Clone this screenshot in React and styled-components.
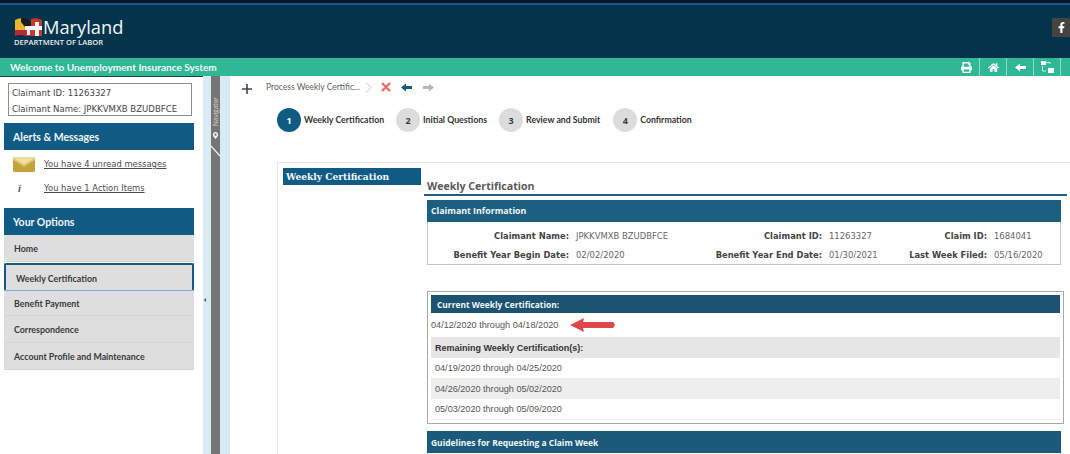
import React from 'react';
import styled, { createGlobalStyle } from 'styled-components';
import { FaPrint, FaHome, FaMapMarkerAlt, FaFacebookF } from 'react-icons/fa';

const GlobalStyle = createGlobalStyle`
  html, body { margin: 0; padding: 0; background: #fff; }
  body { width: 1070px; height: 454px; overflow: hidden; font-family: "DejaVu Sans", sans-serif; }
  * { box-sizing: border-box; }
`;

const Page = styled.div`
  width: 1070px;
  height: 454px;
  overflow: hidden;
  display: flex;
  flex-direction: column;
`;

const Header = styled.header`
  height: 58px;
  flex: none;
  background: #03344b;
  border-top: 3px solid #03182a;
  box-shadow: inset 0 2px 0 #1c5a85;
  display: flex;
  justify-content: space-between;
  padding: 14px 0 0 14px;
`;

const Logo = styled.div`
  display: flex;
  flex-direction: column;
`;

const LogoRow = styled.div`
  display: flex;
  align-items: center;
  height: 20px;
`;

const LogoWord = styled.span`
  font-family: "Open Sans", sans-serif;
  font-size: 18.3px;
  line-height: 20px;
  color: #f4f7f8;
  margin-left: 1px;
`;

const LogoSub = styled.span`
  font-family: "Open Sans", sans-serif;
  font-weight: 600;
  font-size: 7.6px;
  line-height: 10px;
  color: #e6edf0;
`;

const SocialIcon = styled.div`
  width: 18px;
  height: 19px;
  margin-top: 1px;
  background: #464442;
  color: #fff;
  font-size: 11px;
  display: flex;
  align-items: center;
  justify-content: center;
`;

const WelcomeBar = styled.div`
  height: 18px;
  flex: none;
  background: #2fb796;
  display: flex;
  justify-content: space-between;
  align-items: center;
  padding-left: 10px;
`;

const WelcomeText = styled.span`
  font-family: "Lato", sans-serif;
  font-weight: 700;
  font-size: 10.1px;
  color: #f6fbfa;
`;

const BarIcons = styled.div`
  display: flex;
  height: 100%;
  margin-right: 9px;
`;

const BarIcon = styled.div`
  width: 27px;
  height: 100%;
  display: flex;
  align-items: center;
  justify-content: center;
  color: #fff;
  font-size: 11px;
  border-right: 1px solid #8ddbc8;
`;

const Body = styled.div`
  flex: 1;
  display: flex;
  min-height: 0;
`;

const Sidebar = styled.aside`
  width: 203px;
  flex: none;
  border-top: 1px solid #1c3f4e;
  height: 100%;
  padding: 6px 9px 0 4px;
`;

const ClaimantBox = styled.div`
  margin: 0 2px 7px 4px;
  height: 33px;
  border: 1px solid #8c8c8c;
  padding: 1px 3px;
  font-size: 8.55px;
  line-height: 16px;
  color: #444;
  white-space: nowrap;
`;

const SideHeader = styled.div`
  background: #0f5b84;
  color: #f2f7fa;
  font-family: "Lato", sans-serif;
  font-weight: 700;
  font-size: 10.5px;
  height: 27px;
  display: flex;
  align-items: center;
  padding-left: 9px;
`;

const AlertList = styled.div`
  height: 58px;
  padding-top: 2px;
`;

const AlertRow = styled.div`
  height: 24px;
  display: flex;
  align-items: center;
`;

const AlertIcon = styled.div`
  width: 40px;
  padding-left: 9px;
  display: flex;
  font-family: "Liberation Serif", serif;
  font-style: italic;
  font-weight: 700;
  font-size: 10px;
  color: #555;
`;

const AlertLink = styled.a`
  font-size: 8.4px;
  color: #4a4a4a;
  text-decoration: underline;
  white-space: nowrap;
`;

const OptionList = styled.nav`
  display: flex;
  flex-direction: column;
`;

const Option = styled.div`
  height: ${p => p.$h}px;
  background: #dedede;
  border-bottom: 1px solid #d5d5d5;
  display: flex;
  align-items: center;
  padding: 1px 0 0 10px;
  font-family: "Lato", sans-serif;
  font-weight: 700;
  font-size: 8.85px;
  color: #3a3a3a;
  white-space: nowrap;
`;

const ActiveOption = styled(Option)`
  padding-left: 10px;
  margin-top: 1px;
  border: 1px solid #0f5b84;
  border-width: 2px 2px 1px 2px;
  border-bottom-color: #7ea8d6;
  border-radius: 2px;
`;

const Splitter = styled.div`
  width: 27px;
  flex: none;
  background: #d9eaf3;
  display: flex;
  padding-left: 8px;
`;

const Strip = styled.div`
  width: 9px;
  height: 100%;
  background: #777574;
  color: #e8e8e8;
  display: flex;
  flex-direction: column;
  align-items: center;
  padding-top: 21px;
`;

const StripLabel = styled.span`
  writing-mode: vertical-rl;
  transform: rotate(180deg);
  font-family: "Open Sans", sans-serif;
  font-size: 6.4px;
  line-height: 9px;
  color: #d8d8d8;
`;

const StripPin = styled(FaMapMarkerAlt)`
  margin-top: 6px;
  flex: none;
`;

const StripSlash = styled.svg`
  margin-top: 7px;
  overflow: visible;
  flex: none;
`;

const CollapseTick = styled.div`
  width: 0;
  height: 0;
  position: absolute;
  left: 204px;
  top: 298px;
  border-right: 2px solid #4a5560;
  border-top: 2px solid transparent;
  border-bottom: 2px solid transparent;
`;

const Main = styled.main`
  flex: 1;
  min-width: 0;
`;

const Toolbar = styled.div`
  height: 22px;
  display: flex;
  align-items: center;
  padding-left: 12px;
`;

const PlusSign = styled.span`
  width: 24px;
  display: flex;
  margin-top: 3px;
`;

const Crumb = styled.span`
  font-family: "Lato", sans-serif;
  font-size: 8.5px;
  color: #5f5f5f;
  width: 99px;
  white-space: nowrap;
`;

const ToolIcon = styled.span`
  display: flex;
  margin-right: ${p => p.$gap}px;
`;

const Steps = styled.ol`
  list-style: none;
  margin: 10px 0 0;
  padding: 0 0 0 47px;
  height: 24px;
  display: flex;
`;

const Step = styled.li`
  display: flex;
  align-items: center;
  margin-right: ${p => p.$gap}px;
`;

const StepCircle = styled.span`
  width: 24px;
  height: 24px;
  border-radius: 50%;
  background: ${p => (p.$active ? '#0f5b84' : '#dcdcdc')};
  color: ${p => (p.$active ? '#fff' : '#3c3c3c')};
  font-family: "Open Sans", sans-serif;
  font-weight: 700;
  font-size: 9px;
  display: flex;
  align-items: center;
  justify-content: center;
  margin-right: 3px;
`;

const StepLabel = styled.span`
  font-family: "Lato", sans-serif;
  font-weight: 700;
  font-size: 8.75px;
  color: #333;
  margin-top: -2px;
  white-space: nowrap;
`;

const Panel = styled.section`
  margin: 30px 0 0 47px;
  border-top: 1px solid #e8e8e8;
  border-left: 1px solid #e8e8e8;
  display: flex;
  height: 300px;
  overflow: hidden;
`;

const TabColumn = styled.div`
  width: 143px;
  flex: none;
  padding: 5px 0 0 5px;
`;

const Tab = styled.div`
  height: 17px;
  width: 138px;
  background: #0f5b84;
  color: #f4f8fa;
  font-family: "DejaVu Serif", serif;
  font-weight: 700;
  font-size: 9.1px;
  line-height: 17px;
  padding-left: 3px;
  white-space: nowrap;
`;

const Content = styled.div`
  flex: 1;
  min-width: 0;
  padding: 17px 0 0 3px;
`;

const PageTitle = styled.h2`
  margin: 0 3px 4px 0;
  height: 16px;
  padding-left: 3px;
  border-bottom: 2px solid #1a5f7f;
  font-family: "Open Sans", sans-serif;
  font-weight: 700;
  font-size: 10.6px;
  line-height: 12px;
  color: #5a5a5a;
`;

const InfoBox = styled.div`
  width: 634px;
  margin-left: 3px;
  height: 65px;
  border: 1px solid #c4c4c4;
  border-top: 0;
`;

const BandTitle = styled.div`
  height: ${p => p.$h}px;
  background: ${p => p.$bg};
  color: #f3f7f9;
  font-family: "Open Sans", sans-serif;
  font-weight: 700;
  font-size: ${p => p.$fs}px;
  display: flex;
  align-items: center;
  padding-left: ${p => p.$pad}px;
  margin: ${p => (p.$flush ? '0 -1px' : '0')};
`;

const InfoGrid = styled.dl`
  margin: 4px 0 0;
  display: grid;
  grid-template-columns: 141px 99px 142px 70px 83px 1fr;
  column-gap: 6px;
  grid-auto-rows: 19px;
  font-size: 8.45px;
  align-items: center;
  white-space: nowrap;
`;

const InfoLabel = styled.dt`
  font-family: "DejaVu Sans", sans-serif;
  font-weight: 700;
  font-size: 8.35px;
  color: #444;
  text-align: right;
`;

const InfoValue = styled.dd`
  margin: 0 0 0 1px;
  color: #666;
`;

const CurrentBox = styled.div`
  width: 637px;
  margin: 26px 0 0 3px;
  height: 133px;
  border: 1px solid #a8a8a8;
  padding: 3px;
`;

const DateLine = styled.div`
  height: 24px;
  display: flex;
  align-items: center;
  gap: 12px;
  font-family: "Liberation Sans", sans-serif;
  font-size: 9.15px;
  color: #555;
`;

const RemainingTable = styled.div`
  border-bottom: 1px solid #eee;
`;

const RemainingRow = styled.div`
  height: ${p => p.$h}px;
  display: flex;
  align-items: center;
  padding-left: 4px;
  background: ${p => (p.$shade ? '#eeeeee' : '#fff')};
  font-family: "Liberation Sans", sans-serif;
  font-size: 9.1px;
  color: #555;
`;

const RemainingHead = styled(RemainingRow)`
  background: #e6e6e6;
  font-weight: 700;
  font-size: 9px;
  color: #333;
`;

const GuidelineBox = styled.div`
  width: 634px;
  height: 30px;
  margin: 7px 0 0 3px;
  border: 1px solid #c4c4c4;
  border-top: 0;
`;

const Flag = () => (
  <svg width="28" height="21" viewBox="0 0 28 21">
    <path d="M1 3 Q6 0 11 2 L11 13 L1 13 Z" fill="#e8b92f" />
    <path d="M7 1 L12 1 L18 7 L18 10 L11 10 L7 5 Z" fill="#1d1a1a" />
    <path d="M17 2 Q23 0 28 3 L28 19 L12 19 L12 9 L17 9 Z" fill="#c6392f" />
    <path d="M1 13 L12 13 L12 19 Q6 17 1 19 Z" fill="#b8283a" />
    <path d="M11 9 L21 9 L21 5 L25 5 L25 9 L28 9 L28 13 L25 13 L25 19 L21 19 L21 13 L16 13 L16 18 L13 18 L13 13 L11 13 Z" fill="#f5f5f5" />
  </svg>
);

const ArrowIcon = ({ color, w = 11 }) => (
  <svg width={w} height="9" viewBox="0 0 11 9">
    <path d="M0 4.5 L5 0.5 L5 3 L11 3 L11 6 L5 6 L5 8.5 Z" fill={color} />
  </svg>
);

const RightArrowIcon = () => (
  <svg width="11" height="9" viewBox="0 0 11 9">
    <path d="M11 4.5 L6 0.5 L6 3 L0 3 L0 6 L6 6 L6 8.5 Z" fill="#b5b5b5" />
  </svg>
);

const SitemapIcon = () => (
  <svg width="13" height="12" viewBox="0 0 13 12">
    <rect x="0" y="0" width="5" height="4" fill="#fff" />
    <rect x="7" y="7" width="6" height="5" fill="#fff" />
    <path d="M5 1.5 H9 V3" stroke="#d8f3ec" strokeWidth="1" fill="none" />
    <path d="M1.5 5 V10 H5" stroke="#d8f3ec" strokeWidth="1" fill="none" />
  </svg>
);

const MailIcon = () => (
  <svg width="22" height="15" viewBox="0 0 22 15">
    <rect width="22" height="15" rx="1.5" fill="#c3a33d" />
    <path d="M0 1 L11 8 L22 1 L22 0 L0 0 Z" fill="#eedf9f" />
    <path d="M0 2 L11 9 L22 2" stroke="#e9d88f" strokeWidth="1" fill="none" />
  </svg>
);

const RedArrow = () => (
  <svg width="46" height="14" viewBox="0 0 46 14">
    <path d="M0 7 L14 0 L13 4 L43 4 Q46.5 7 43 10 L13 10 L14 14 Z" fill="#e0474a" />
  </svg>
);

const claimInfo = [
  ['Claimant Name:', 'JPKKVMXB BZUDBFCE', 'Claimant ID:', '11263327', 'Claim ID:', '1684041'],
  ['Benefit Year Begin Date:', '02/02/2020', 'Benefit Year End Date:', '01/30/2021', 'Last Week Filed:', '05/16/2020'],
];

const steps = [
  { n: 1, label: 'Weekly Certification', gap: 12, active: true },
  { n: 2, label: 'Initial Questions', gap: 12 },
  { n: 3, label: 'Review and Submit', gap: 13 },
  { n: 4, label: 'Confirmation', gap: 0 },
];

const App = () => (
  <Page>
    <GlobalStyle />
    <Header>
      <Logo>
        <LogoRow>
          <Flag />
          <LogoWord>Maryland</LogoWord>
        </LogoRow>
        <LogoSub>DEPARTMENT OF LABOR</LogoSub>
      </Logo>
      <SocialIcon><FaFacebookF /></SocialIcon>
    </Header>
    <WelcomeBar>
      <WelcomeText>Welcome to Unemployment Insurance System</WelcomeText>
      <BarIcons>
        <BarIcon><FaPrint /></BarIcon>
        <BarIcon><FaHome /></BarIcon>
        <BarIcon><ArrowIcon color="#fff" /></BarIcon>
        <BarIcon><SitemapIcon /></BarIcon>
      </BarIcons>
    </WelcomeBar>
    <Body>
      <Sidebar>
        <ClaimantBox>
          Claimant ID: 11263327<br />
          Claimant Name: JPKKVMXB BZUDBFCE
        </ClaimantBox>
        <SideHeader>Alerts &amp; Messages</SideHeader>
        <AlertList>
          <AlertRow>
            <AlertIcon><MailIcon /></AlertIcon>
            <AlertLink>You have 4 unread messages</AlertLink>
          </AlertRow>
          <AlertRow>
            <AlertIcon>&nbsp;&nbsp;i</AlertIcon>
            <AlertLink>You have 1 Action Items</AlertLink>
          </AlertRow>
        </AlertList>
        <SideHeader>Your Options</SideHeader>
        <OptionList>
          <Option $h={27}>Home</Option>
          <ActiveOption $h={28}>Weekly Certification</ActiveOption>
          <Option $h={25}>Benefit Payment</Option>
          <Option $h={27}>Correspondence</Option>
          <Option $h={27}>Account Profile and Maintenance</Option>
        </OptionList>
      </Sidebar>
      <Splitter>
        <Strip>
          <StripLabel>Navigator</StripLabel>
          <StripPin size={7} color="#f2f2f2" />
          <StripSlash width="9" height="10" viewBox="0 0 9 10">
            <path d="M0 0 L9 10" stroke="#f0f0f0" strokeWidth="1.2" />
          </StripSlash>
        </Strip>
      </Splitter>
      <CollapseTick />
      <Main>
        <Toolbar>
          <PlusSign>
            <svg width="10" height="10" viewBox="0 0 10 10">
              <path d="M5 0 V10 M0 5 H10" stroke="#444" strokeWidth="1.6" />
            </svg>
          </PlusSign>
          <Crumb>Process Weekly Certific...</Crumb>
          <ToolIcon $gap={9}>
            <svg width="7" height="11" viewBox="0 0 7 11">
              <path d="M1 0.5 L6 5.5 L1 10.5" stroke="#c8c8c8" strokeWidth="1" fill="none" />
            </svg>
          </ToolIcon>
          <ToolIcon $gap={10}>
            <svg width="10" height="10" viewBox="0 0 10 10">
              <path d="M1 1 L9 9 M9 1 L1 9" stroke="#ec6a6a" strokeWidth="2.4" />
            </svg>
          </ToolIcon>
          <ToolIcon $gap={11}><ArrowIcon color="#0f5b84" /></ToolIcon>
          <ToolIcon $gap={0}><RightArrowIcon /></ToolIcon>
        </Toolbar>
        <Steps>
          {steps.map(s => (
            <Step key={s.n} $gap={s.gap}>
              <StepCircle $active={s.active}>{s.n}</StepCircle>
              <StepLabel>{s.label}</StepLabel>
            </Step>
          ))}
        </Steps>
        <Panel>
          <TabColumn>
            <Tab>Weekly Certification</Tab>
          </TabColumn>
          <Content>
            <PageTitle>Weekly Certification</PageTitle>
            <InfoBox>
              <BandTitle $h={22} $bg="#1d5f80" $pad={4} $fs={8.8} $flush>Claimant Information</BandTitle>
              <InfoGrid>
                {claimInfo.map(row =>
                  row.map((cell, i) =>
                    i % 2 === 0
                      ? <InfoLabel key={cell}>{cell}</InfoLabel>
                      : <InfoValue key={cell}>{cell}</InfoValue>
                  )
                )}
              </InfoGrid>
            </InfoBox>
            <CurrentBox>
              <BandTitle $h={18} $bg="#1b5370" $pad={6} $fs={8.4}>Current Weekly Certification:</BandTitle>
              <DateLine>
                04/12/2020 through 04/18/2020
                <RedArrow />
              </DateLine>
              <RemainingTable>
                <RemainingHead $h={21}>Remaining Weekly Certification(s):</RemainingHead>
                <RemainingRow $h={20}>04/19/2020 through 04/25/2020</RemainingRow>
                <RemainingRow $h={21} $shade>04/26/2020 through 05/02/2020</RemainingRow>
                <RemainingRow $h={20}>05/03/2020 through 05/09/2020</RemainingRow>
              </RemainingTable>
            </CurrentBox>
            <GuidelineBox>
              <BandTitle $h={22} $bg="#1b5a7a" $pad={4} $fs={8.45} $flush>Guidelines for Requesting a Claim Week</BandTitle>
            </GuidelineBox>
          </Content>
        </Panel>
      </Main>
    </Body>
  </Page>
);

export default App;
